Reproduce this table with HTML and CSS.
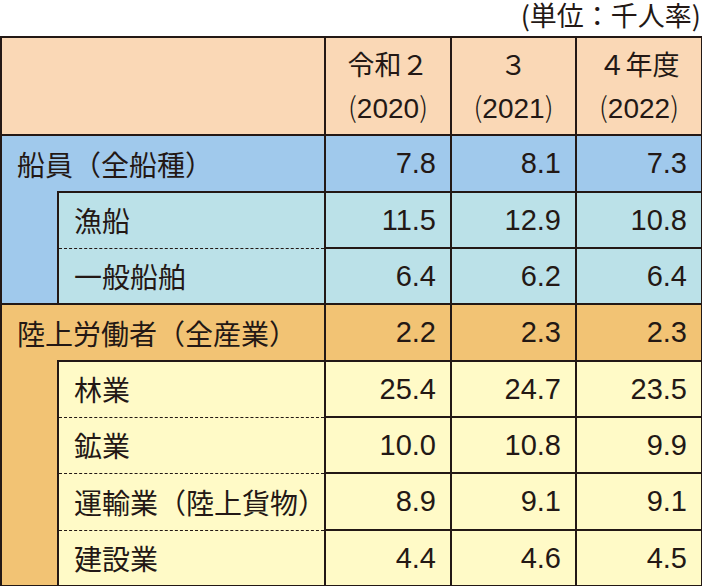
FILE: index.html
```html
<!DOCTYPE html>
<html lang="ja">
<head>
<meta charset="utf-8">
<link rel="stylesheet" href="styles.css">
</head>
<body>
<div class="page">
  <div class="unit">(単位：千人率)</div>
  <table class="rates">
    <colgroup>
      <col class="c-indent">
      <col class="c-label">
      <col class="c-num">
      <col class="c-num2">
      <col class="c-num">
    </colgroup>
    <thead>
      <tr class="head">
        <th colspan="2" class="blank"></th>
        <th><span class="yr">令和２</span><span class="ad"><span class="pr">(</span>2020<span class="pr">)</span></span></th>
        <th><span class="yr">３</span><span class="ad"><span class="pr">(</span>2021<span class="pr">)</span></span></th>
        <th><span class="yr">４年度</span><span class="ad"><span class="pr">(</span>2022<span class="pr">)</span></span></th>
      </tr>
    </thead>
    <tbody class="ship">
      <tr class="r57">
        <td colspan="2" class="group">船員（全船種）</td>
        <td class="num">7.8</td><td class="num">8.1</td><td class="num">7.3</td>
      </tr>
      <tr class="r56">
        <td rowspan="2" class="indent"></td>
        <td class="sub first">漁船</td>
        <td class="num">11.5</td><td class="num">12.9</td><td class="num">10.8</td>
      </tr>
      <tr class="r56">
        <td class="sub last">一般船舶</td>
        <td class="num">6.4</td><td class="num">6.2</td><td class="num">6.4</td>
      </tr>
    </tbody>
    <tbody class="land">
      <tr class="r57">
        <td colspan="2" class="group">陸上労働者（全産業）</td>
        <td class="num">2.2</td><td class="num">2.3</td><td class="num">2.3</td>
      </tr>
      <tr class="r56">
        <td rowspan="4" class="indent"></td>
        <td class="sub first">林業</td>
        <td class="num">25.4</td><td class="num">24.7</td><td class="num">23.5</td>
      </tr>
      <tr class="r56">
        <td class="sub">鉱業</td>
        <td class="num">10.0</td><td class="num">10.8</td><td class="num">9.9</td>
      </tr>
      <tr class="r57">
        <td class="sub">運輸業（陸上貨物）</td>
        <td class="num">8.9</td><td class="num">9.1</td><td class="num">9.1</td>
      </tr>
      <tr class="r56">
        <td class="sub last">建設業</td>
        <td class="num">4.4</td><td class="num">4.6</td><td class="num">4.5</td>
      </tr>
    </tbody>
  </table>
</div>
</body>
</html>
```

FILE: styles.css
```css
html, body {
  margin: 0;
  padding: 0;
  background: #ffffff;
}

body {
  font-family: "Liberation Sans", "Noto Sans CJK JP", sans-serif;
  color: #231815;
}

.page {
  width: 702px;
}

.unit {
  height: 36px;
  padding-top: 2px;
  line-height: 26px;
  text-align: right;
  padding-right: 1px;
  font-family: "Noto Sans CJK JP", sans-serif;
  font-size: 27px;
  box-sizing: border-box;
}

.rates {
  width: 702px;
  border-collapse: collapse;
  table-layout: fixed;
  border: 2px solid #231815;
}

.c-indent { width: 57px; }
.c-label { width: 267px; }
.c-num { width: 126px; }
.c-num2 { width: 125px; }

.rates th,
.rates td {
  border: 2px solid #231815;
  padding: 0;
}

.head {
  height: 98px;
  background: #fad8b6;
}

.head th {
  font-weight: normal;
  text-align: center;
  vertical-align: middle;
  line-height: 42px;
}

.yr {
  display: block;
  font-family: "Noto Sans CJK JP", sans-serif;
  font-size: 27px;
}

.ad {
  display: block;
  font-size: 28px;
}

.pr {
  font-family: "Noto Sans CJK JP", sans-serif;
  font-weight: 300;
}

.r56 { height: 56px; }
.r57 { height: 57px; }

.group {
  font-size: 28px;
  padding-left: 15px !important;
  border-bottom: none !important;
  white-space: nowrap;
}

.indent {
  border-top: none !important;
}

.sub {
  font-size: 28px;
  padding-left: 15px !important;
  white-space: nowrap;
  border-top: 1px dashed #231815 !important;
  border-bottom: 1px dashed #231815 !important;
}

.sub.first {
  border-top: 2px solid #231815 !important;
}

.sub.last {
  border-bottom: 2px solid #231815 !important;
}

.num {
  text-align: right;
  font-size: 29px;
  padding-right: 14px !important;
}

.ship .group,
.ship .group ~ .num,
.ship .indent {
  background: #a0c9ec;
}

.ship .sub,
.ship .sub ~ .num {
  background: #bbe1e8;
}

.land .group,
.land .group ~ .num,
.land .indent {
  background: #f2c374;
}

.land .sub,
.land .sub ~ .num {
  background: #fffac7;
}
```
